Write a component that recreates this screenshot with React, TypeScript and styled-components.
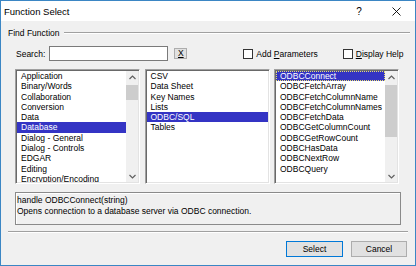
import React from "react";
import styled, { createGlobalStyle } from "styled-components";

const Global = createGlobalStyle`
  html, body { margin: 0; padding: 0; background: #f0f0f0; }
  body { font-family: "Liberation Sans", Arial, sans-serif; }
`;

const Window = styled.div`
  width: 416px;
  height: 266px;
  box-sizing: border-box;
  border: 1px solid #3b86c4;
  background: #f0f0f0;
  display: flex;
  flex-direction: column;
  overflow: hidden;
  font-size: 8.5px;
  color: #000;
`;

const TitleBar = styled.div`
  height: 20px;
  flex: none;
  background: #fff;
  display: flex;
  align-items: center;
  padding-left: 3px;
  font-size: 9.5px;
`;

const Title = styled.span`
  flex: 1;
`;

const TitleButton = styled.span<{ $w: number }>`
  width: ${(p) => p.$w}px;
  height: 20px;
  display: flex;
  align-items: center;
  justify-content: center;
  font-size: 10px;
`;

const Body = styled.div`
  flex: 1;
  display: flex;
  flex-direction: column;
  padding: 7px 0 0 7px;
`;

const GroupHeader = styled.div`
  display: flex;
  align-items: center;
  height: 10px;
  line-height: 10px;
  margin-right: 5px;
`;

const GroupLine = styled.div`
  flex: 1;
  margin-left: 4px;
  border-top: 1px solid #a0a0a0;
  border-bottom: 1px solid #fff;
`;

const SearchRow = styled.div`
  display: flex;
  align-items: center;
  height: 15px;
  margin-top: 8px;
  padding-left: 8px;
`;

const Label = styled.span`
  white-space: nowrap;
`;

const SearchInput = styled.div`
  width: 119px;
  height: 15px;
  box-sizing: border-box;
  margin-left: 4px;
  background: #fff;
  border: 1px solid #7a7a7a;
`;

const SmallButton = styled.div`
  width: 13px;
  height: 11px;
  box-sizing: border-box;
  margin-left: 6px;
  background: #e1e1e1;
  border: 1px solid #adadad;
  display: flex;
  align-items: center;
  justify-content: center;
  font-size: 8.5px;
  line-height: 9px;
`;

const CheckWrap = styled.div<{ $ml: number }>`
  display: flex;
  align-items: center;
  margin-left: ${(p) => p.$ml}px;
`;

const CheckBox = styled.div`
  width: 10px;
  height: 10px;
  box-sizing: border-box;
  background: #fff;
  border: 1px solid #333;
  margin-right: 3px;
`;

const ListsRow = styled.div`
  display: flex;
  gap: 4.5px;
  margin-top: 8px;
  padding-left: 7px;
  height: 115px;
`;

const ListFrame = styled.div`
  width: 125px;
  height: 115px;
  box-sizing: border-box;
  background: #fff;
  border-top: 1px solid #a0a0a0;
  border-left: 1px solid #a0a0a0;
  border-right: 1px solid #fff;
  border-bottom: 1px solid #fff;
  box-shadow: inset 1px 1px 0 #696969, inset -1px -1px 0 #e3e3e3;
  padding: 1px;
  display: flex;
`;

const Items = styled.div`
  flex: 1;
  display: flex;
  flex-direction: column;
  overflow: hidden;
`;

const Item = styled.div<{ $sel?: boolean; $focus?: boolean }>`
  height: 10.3px;
  flex: none;
  line-height: 10.3px;
  padding-left: 4px;
  white-space: nowrap;
  box-sizing: border-box;
  background: ${(p) => (p.$sel ? "#3434c4" : "transparent")};
  color: ${(p) => (p.$sel ? "#fff" : "#000")};
  outline: ${(p) => (p.$focus ? "1px dotted #e8e070" : "none")};
  outline-offset: -1px;
`;

const ScrollBar = styled.div`
  width: 12px;
  flex: none;
  background: #f0f0f0;
  display: flex;
  flex-direction: column;
`;

const Arrow = styled.div`
  height: 12px;
  flex: none;
  display: flex;
  align-items: center;
  justify-content: center;
`;

const Thumb = styled.div<{ $h: number }>`
  height: ${(p) => p.$h}px;
  margin-top: 2px;
  background: #cdcdcd;
`;

const Spacer = styled.div`
  flex: 1;
`;

const DescBox = styled.div`
  width: 386px;
  height: 33px;
  box-sizing: border-box;
  margin-top: 8px;
  margin-left: 7px;
  border: 1px solid #8a8a8a;
  box-shadow: inset 1px 1px 0 #fff;
  padding: 2px 0 0 1px;
  line-height: 11px;
`;

const Separator = styled.div`
  margin-top: 6px;
  margin-right: 7px;
  border-top: 1px solid #a0a0a0;
  border-bottom: 1px solid #fff;
`;

const ButtonRow = styled.div`
  display: flex;
  justify-content: flex-end;
  gap: 8px;
  margin-top: 8px;
  padding-right: 8px;
`;

const Button = styled.div<{ $default?: boolean; $w: number }>`
  width: ${(p) => p.$w}px;
  height: 16px;
  box-sizing: border-box;
  background: #e1e1e1;
  border: 1px solid ${(p) => (p.$default ? "#0078d7" : "#adadad")};
  display: flex;
  align-items: center;
  justify-content: center;
  font-size: 8.5px;
`;

const Chevron = ({ up }: { up?: boolean }) => (
  <svg width="7" height="5" viewBox="0 0 7 5">
    <polyline
      points={up ? "0.5,4 3.5,1 6.5,4" : "0.5,1 3.5,4 6.5,1"}
      fill="none"
      stroke="#606060"
      strokeWidth="1.2"
    />
  </svg>
);

const CloseIcon = () => (
  <svg width="9" height="9" viewBox="0 0 9 9">
    <path d="M0.5 0.5 L8.5 8.5 M8.5 0.5 L0.5 8.5" stroke="#000" strokeWidth="0.9" />
  </svg>
);

type ListProps = {
  items: string[];
  selected: number;
  focus?: boolean;
  thumb?: number;
};

const ListBox = ({ items, selected, focus, thumb }: ListProps) => (
  <ListFrame>
    <Items>
      {items.map((t, i) => (
        <Item key={t} $sel={i === selected} $focus={focus && i === selected}>
          {t}
        </Item>
      ))}
    </Items>
    {thumb !== undefined && (
      <ScrollBar>
        <Arrow>
          <Chevron up />
        </Arrow>
        <Thumb $h={thumb} />
        <Spacer />
        <Arrow>
          <Chevron />
        </Arrow>
      </ScrollBar>
    )}
  </ListFrame>
);

const categories = [
  "Application",
  "Binary/Words",
  "Collaboration",
  "Conversion",
  "Data",
  "Database",
  "Dialog - General",
  "Dialog - Controls",
  "EDGAR",
  "Editing",
  "Encryption/Encoding",
];

const subs = ["CSV", "Data Sheet", "Key Names", "Lists", "ODBC/SQL", "Tables"];

const funcs = [
  "ODBCConnect",
  "ODBCFetchArray",
  "ODBCFetchColumnName",
  "ODBCFetchColumnNames",
  "ODBCFetchData",
  "ODBCGetColumnCount",
  "ODBCGetRowCount",
  "ODBCHasData",
  "ODBCNextRow",
  "ODBCQuery",
];

export default function App() {
  return (
    <Window>
      <Global />
      <TitleBar>
        <Title>Function Select</Title>
        <TitleButton $w={36}>?</TitleButton>
        <TitleButton $w={38}>
          <CloseIcon />
        </TitleButton>
      </TitleBar>
      <Body>
        <GroupHeader>
          <Label>Find Function</Label>
          <GroupLine />
        </GroupHeader>
        <SearchRow>
          <Label>Search:</Label>
          <SearchInput />
          <SmallButton>
            <u>X</u>
          </SmallButton>
          <CheckWrap $ml={56}>
            <CheckBox />
            <Label>
              Add <u>P</u>arameters
            </Label>
          </CheckWrap>
          <CheckWrap $ml={25}>
            <CheckBox />
            <Label>
              <u>D</u>isplay Help
            </Label>
          </CheckWrap>
        </SearchRow>
        <ListsRow>
          <ListBox items={categories} selected={5} thumb={15} />
          <ListBox items={subs} selected={4} />
          <ListBox items={funcs} selected={0} focus thumb={52} />
        </ListsRow>
        <DescBox>
          handle ODBCConnect(string)
          <br />
          Opens connection to a database server via ODBC connection.
        </DescBox>
        <Separator />
        <ButtonRow>
          <Button $default $w={57}>
            Select
          </Button>
          <Button $w={56}>Cancel</Button>
        </ButtonRow>
      </Body>
    </Window>
  );
}
